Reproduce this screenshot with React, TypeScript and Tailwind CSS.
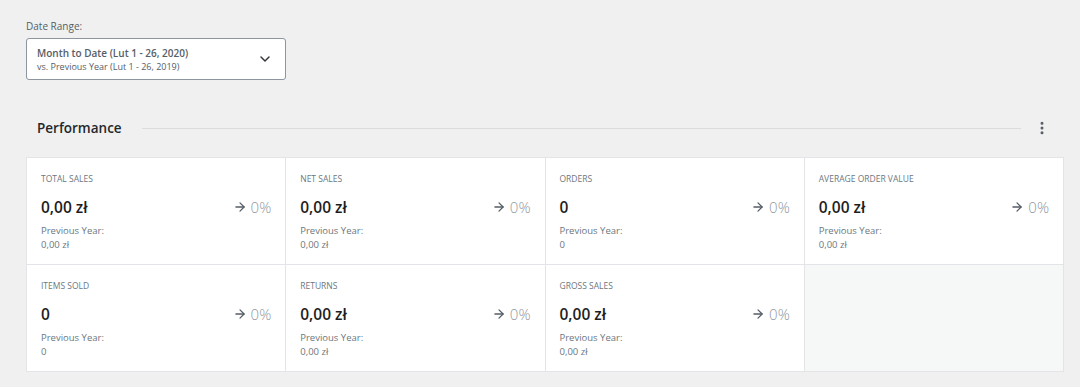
import React from "react";
import { ChevronDown, ArrowRight, MoreVertical } from "lucide-react";

type Stat = { label: string; value: string; prev: string };

const stats: Stat[] = [
  { label: "Total Sales", value: "0,00 zł", prev: "0,00 zł" },
  { label: "Net Sales", value: "0,00 zł", prev: "0,00 zł" },
  { label: "Orders", value: "0", prev: "0" },
  { label: "Average Order Value", value: "0,00 zł", prev: "0,00 zł" },
  { label: "Items Sold", value: "0", prev: "0" },
  { label: "Returns", value: "0,00 zł", prev: "0,00 zł" },
  { label: "Gross Sales", value: "0,00 zł", prev: "0,00 zł" },
];

const StatCell: React.FC<{ stat: Stat }> = ({ stat }) => (
  <div className="bg-white border-r border-b border-[#e2e4e7] px-[14px] pt-[15px] h-[107px]">
    <div className="text-[8.5px] uppercase text-[#6c7781] leading-[12px]">{stat.label}</div>
    <div className="flex items-center justify-between mt-[11px]">
      <span className="text-[15.5px] font-semibold text-[#1e1e1e] leading-[22px]">{stat.value}</span>
      <span className="flex items-center gap-[4px] text-[15px] font-light text-[#8f98a1] leading-[22px]">
        <ArrowRight size={14} strokeWidth={2.2} className="text-[#555d66]" />
        0%
      </span>
    </div>
    <div className="mt-[6px] text-[9.5px] text-[#6c7781] leading-[13px]">Previous Year:</div>
    <div className="mt-[1px] text-[9.5px] text-[#6c7781] leading-[14px]">{stat.prev}</div>
  </div>
);

const App: React.FC = () => {
  return (
    <div
      className="w-[1080px] h-[387px] bg-[#f0f0f0] pl-[26px] pt-[19px]"
      style={{ fontFamily: '"Open Sans", "Noto Sans", sans-serif' }}
    >
      {/* Date range */}
      <div className="text-[10px] text-[#555d66] leading-[14px]">Date Range:</div>
      <button className="mt-[5px] w-[260px] h-[42px] bg-white border border-[#8d96a0] rounded-[3px] flex items-center justify-between pl-[10px] pr-[12px] text-left">
        <div className="flex flex-col">
          <span className="text-[10px] font-semibold text-[#555d66] leading-[14px]">
            Month to Date (Lut 1 - 26, 2020)
          </span>
          <span className="text-[9px] text-[#555d66] leading-[13px]">vs. Previous Year (Lut 1 - 26, 2019)</span>
        </div>
        <ChevronDown size={16} strokeWidth={2.2} className="text-[#32373c]" />
      </button>

      {/* Performance header */}
      <div className="mt-[35px] flex items-center w-[1037px] pl-[11px] h-[26px]">
        <h2 className="text-[13.5px] font-semibold text-[#23282d] mr-[20px]">Performance</h2>
        <div className="flex-1 h-px bg-[#dcdcde]" />
        <div className="w-[42px] flex justify-start pl-[13px]">
          <MoreVertical size={16} strokeWidth={2.5} className="text-[#555d66]" />
        </div>
      </div>

      {/* Grid */}
      <div className="mt-[16px] w-[1038px] grid grid-cols-4 border-t border-l border-[#e2e4e7]">
        {stats.map((s) => (
          <StatCell key={s.label} stat={s} />
        ))}
        <div className="bg-[#f6f7f7] border-r border-b border-[#e2e4e7] h-[107px]" />
      </div>
    </div>
  );
};

export default App;
